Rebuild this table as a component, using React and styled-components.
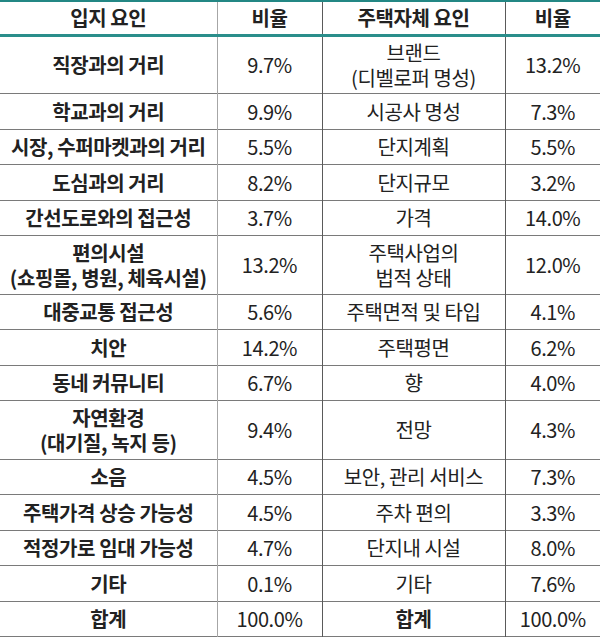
import React from "react";
import styled, { createGlobalStyle } from "styled-components";

const GlobalStyle = createGlobalStyle`
  body {
    margin: 0;
    background: #fff;
    font-family: "Noto Sans CJK KR", "Noto Sans", sans-serif;
    color: #222;
  }
`;

const Table = styled.table`
  width: 600px;
  border-collapse: collapse;
  table-layout: fixed;
  font-size: 20px;
  letter-spacing: -0.02em;
`;

const HeadRow = styled.tr`
  height: 34px;
  border-top: 2px solid #238784;
  border-bottom: 3px solid #2a8e8b;
`;

const Row = styled.tr`
  height: ${(p) => (p.$tall ? "58.5px" : "35.5px")};
  border-bottom: 1px solid #7a7a7a;
`;

const Th = styled.th`
  padding: 0;
  font-weight: 700;
  text-align: center;
  vertical-align: middle;
  line-height: 25px;
  border-right: ${(p) => (p.$light ? "1px solid #a6a6a6" : "1px solid #5a5a5a")};
  &:last-child {
    border-right: none;
  }
`;

const Td = styled.td`
  padding: 0;
  text-align: center;
  vertical-align: middle;
  line-height: 25px;
  font-weight: ${(p) => (p.$bold ? 700 : 400)};
  border-right: ${(p) => (p.$light ? "1px solid #a6a6a6" : "1px solid #5a5a5a")};
  &:last-child {
    border-right: none;
  }
`;

const rows = [
  ["직장과의 거리", "9.7%", ["브랜드", "(디벨로퍼 명성)"], "13.2%", true],
  ["학교과의 거리", "9.9%", "시공사 명성", "7.3%"],
  ["시장, 수퍼마켓과의 거리", "5.5%", "단지계획", "5.5%"],
  ["도심과의 거리", "8.2%", "단지규모", "3.2%"],
  ["간선도로와의 접근성", "3.7%", "가격", "14.0%"],
  [["편의시설", "(쇼핑몰, 병원, 체육시설)"], "13.2%", ["주택사업의", "법적 상태"], "12.0%", true],
  ["대중교통 접근성", "5.6%", "주택면적 및 타입", "4.1%"],
  ["치안", "14.2%", "주택평면", "6.2%"],
  ["동네 커뮤니티", "6.7%", "향", "4.0%"],
  [["자연환경", "(대기질, 녹지 등)"], "9.4%", "전망", "4.3%", true],
  ["소음", "4.5%", "보안, 관리 서비스", "7.3%"],
  ["주택가격 상승 가능성", "4.5%", "주차 편의", "3.3%"],
  ["적정가로 임대 가능성", "4.7%", "단지내 시설", "8.0%"],
  ["기타", "0.1%", "기타", "7.6%"],
  ["합계", "100.0%", "합계", "100.0%"],
];

function Lines({ value }) {
  if (Array.isArray(value)) {
    return value.map((line, i) => (
      <React.Fragment key={i}>
        {i > 0 && <br />}
        {line}
      </React.Fragment>
    ));
  }
  return value;
}

function App() {
  return (
    <>
      <GlobalStyle />
      <Table>
        <colgroup>
          <col style={{ width: "217px" }} />
          <col style={{ width: "105px" }} />
          <col style={{ width: "183px" }} />
          <col style={{ width: "95px" }} />
        </colgroup>
        <thead>
          <HeadRow>
            <Th $light>입지 요인</Th>
            <Th>비율</Th>
            <Th>주택자체 요인</Th>
            <Th>비율</Th>
          </HeadRow>
        </thead>
        <tbody>
          {rows.map(([a, b, c, d, tall], i) => (
            <Row key={i} $tall={tall}>
              <Td $bold $light>
                <Lines value={a} />
              </Td>
              <Td>{b}</Td>
              <Td $bold={c === "합계"}>
                <Lines value={c} />
              </Td>
              <Td>{d}</Td>
            </Row>
          ))}
        </tbody>
      </Table>
    </>
  );
}

export default App;
